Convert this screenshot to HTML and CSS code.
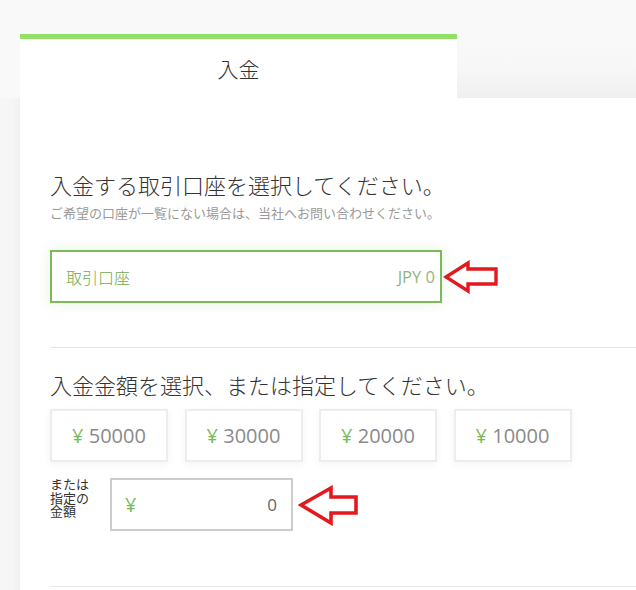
FILE: index.html
```html
<!DOCTYPE html>
<html lang="ja">
<head>
<meta charset="utf-8">
<title>入金</title>
<link rel="stylesheet" href="styles.css">
</head>
<body>
<div class="tab-row">
  <div class="tab">入金</div>
  <div class="tab-filler"></div>
</div>
<main class="panel">
  <section class="section">
    <h2 class="heading first">入金する取引口座を選択してください。</h2>
    <p class="sub">ご希望の口座が一覧にない場合は、当社へお問い合わせください。</p>
    <div class="account">
      <span class="account-name">取引口座</span>
      <span class="account-bal">JPY 0</span>
      <svg class="arrow arrow-1" width="57" height="34" viewBox="0 0 57 34"><path d="M3 17 L25 3 L25 9 L53 9 L53 24 L25 24 L25 31 Z" fill="#fff" stroke="#e3191f" stroke-width="3.4" stroke-linejoin="miter"/></svg>
    </div>
  </section>
  <hr class="divider">
  <section class="section">
    <h2 class="heading second">入金金額を選択、または指定してください。</h2>
    <div class="amounts">
      <button class="amount"><span class="yen">¥</span> 50000</button>
      <button class="amount"><span class="yen">¥</span> 30000</button>
      <button class="amount"><span class="yen">¥</span> 20000</button>
      <button class="amount"><span class="yen">¥</span> 10000</button>
    </div>
    <div class="custom">
      <div class="custom-label">または指定の金額</div>
      <div class="custom-input">
        <span class="yen big">¥</span>
        <span class="custom-val">0</span>
        <svg class="arrow arrow-2" width="61" height="41" viewBox="0 0 61 41"><path d="M3 20 L33 3 L33 12 L58 12 L58 28 L33 28 L33 38 Z" fill="#fff" stroke="#e3191f" stroke-width="3.6" stroke-linejoin="miter"/></svg>
      </div>
    </div>
  </section>
  <hr class="divider bottom">
</main>
</body>
</html>
```
FILE: styles.css
```css
html, body {
  margin: 0;
  padding: 0;
}
body {
  background: #f6f6f6;
  font-family: "Open Sans", "Noto Sans CJK JP", sans-serif;
  color: #333;
  width: 636px;
  height: 590px;
  overflow: hidden;
}
.tab-row {
  display: flex;
  padding-top: 34px;
  padding-left: 20px;
  background: #f9f9f9;
}
.tab {
  width: 437px;
  height: 64px;
  box-sizing: border-box;
  border-top: 5px solid #93e067;
  background: #fff;
  display: flex;
  align-items: center;
  justify-content: center;
  font-family: "Noto Sans CJK JP", sans-serif;
  font-weight: 300;
  font-size: 21px;
  color: #333;
  padding-bottom: 2px;
}
.tab-filler {
  flex: 1;
  background: linear-gradient(to bottom, #f9f9f9 0%, #f7f7f7 55%, #efefef 100%);
}
.panel {
  margin-left: 20px;
  background: #fff;
  padding-left: 30px;
  height: 520px;
  box-shadow: -3px 0 6px rgba(0, 0, 0, 0.03);
}
.section {
  margin: 0;
}
.heading {
  margin: 0;
  font-family: "Noto Sans CJK JP", sans-serif;
  font-weight: 300;
  font-size: 22px;
  line-height: 26px;
  color: #333;
}
.heading.first {
  padding-top: 73px;
}
.heading.second {
  margin-top: 23px;
}
.sub {
  margin: 7px 0 0;
  font-family: "Noto Sans CJK JP", sans-serif;
  font-weight: 400;
  font-size: 13px;
  line-height: 18px;
  color: #9a9a9a;
}
.account {
  position: relative;
  margin-top: 28px;
  width: 392px;
  height: 53px;
  box-sizing: border-box;
  border: 2px solid #7aba58;
  box-shadow: 0 0 12px rgba(130, 200, 90, 0.22);
  display: flex;
  align-items: center;
  justify-content: space-between;
  padding: 0 5px 0 14px;
  background: #fff;
}
.account-name {
  font-family: "Noto Sans CJK JP", sans-serif;
  font-weight: 300;
  font-size: 16px;
  color: #6fab4d;
}
.account-bal {
  font-size: 16.5px;
  color: #93b57c;
}
.arrow {
  position: absolute;
}
.arrow-1 {
  left: calc(100% + 3px);
  top: 8px;
}
.divider {
  margin: 44px 0 0;
  border: 0;
  border-top: 1px solid #e6e6e6;
  height: 0;
}
.divider.bottom {
  margin-top: 55px;
}
.amounts {
  display: flex;
  gap: 16.5px;
  margin-top: 12px;
}
.amount {
  width: 118px;
  height: 53px;
  box-sizing: border-box;
  border: 2px solid #ededed;
  background: #fff;
  box-shadow: 0 2px 8px rgba(0, 0, 0, 0.05);
  font-family: "Open Sans", sans-serif;
  font-size: 20px;
  color: #8a8a8a;
  padding: 0;
  cursor: pointer;
}
.yen {
  color: #7ab85a;
}
.custom {
  display: flex;
  margin-top: 16px;
  align-items: flex-start;
}
.custom-label {
  width: 40px;
  font-family: "Noto Sans CJK JP", sans-serif;
  font-weight: 400;
  font-size: 13px;
  line-height: 13.5px;
  color: #333;
  margin-right: 20px;
  margin-top: -1px;
}
.custom-input {
  position: relative;
  width: 183px;
  height: 53px;
  box-sizing: border-box;
  border: 2px solid #cccccc;
  display: flex;
  align-items: center;
  justify-content: space-between;
  padding: 0 14px 0 13px;
  background: #fff;
}
.yen.big {
  font-size: 20px;
}
.custom-val {
  font-size: 17px;
  color: #666;
}
.arrow-2 {
  left: calc(100% + 7px);
  top: 5px;
}
```
